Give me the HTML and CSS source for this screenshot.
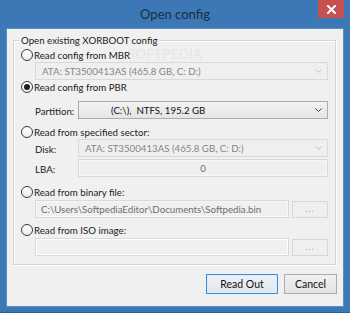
FILE: index.html
```html
<!DOCTYPE html>
<html>
<head>
<meta charset="utf-8">
<link rel="stylesheet" href="styles.css">
</head>
<body>
<div class="window">
  <div class="titlebar">
    <span class="title">Open config</span>
    <div class="close"><svg width="9" height="9" viewBox="0 0 9 9"><path d="M1 1 L8 8 M8 1 L1 8" stroke="#fff" stroke-width="2" stroke-linecap="square"/></svg></div>
  </div>
  <div class="client">
    <div class="group">
      <span class="group-title">Open existing XORBOOT config</span>
      <span class="watermark">SOFTPEDIA</span>

      <div class="radio-row"><span class="radio"></span><span class="rl">Read config from MBR</span></div>
      <div class="indent">
        <div class="combo disabled"><span class="val">ATA: ST3500413AS (465.8 GB, C: D:)</span><svg class="chev" width="7" height="4" viewBox="0 0 7 4"><path d="M0.5 0.5 L3.5 3.5 L6.5 0.5" fill="none" stroke="currentColor"/></svg></div>
      </div>

      <div class="radio-row"><span class="radio checked"></span><span class="rl">Read config from PBR</span></div>
      <div class="indent field-row gap7">
        <span class="lbl">Partition:</span>
        <div class="combo enabled"><span class="val part">(C:\),&nbsp; NTFS, 195.2 GB</span><svg class="chev" width="7" height="4" viewBox="0 0 7 4"><path d="M0.5 0.5 L3.5 3.5 L6.5 0.5" fill="none" stroke="currentColor"/></svg></div>
      </div>

      <div class="radio-row gap6"><span class="radio"></span><span class="rl">Read from specified sector:</span></div>
      <div class="indent field-row">
        <span class="lbl">Disk:</span>
        <div class="combo disabled"><span class="val">ATA: ST3500413AS (465.8 GB, C: D:)</span><svg class="chev" width="7" height="4" viewBox="0 0 7 4"><path d="M0.5 0.5 L3.5 3.5 L6.5 0.5" fill="none" stroke="currentColor"/></svg></div>
      </div>
      <div class="indent field-row gap2">
        <span class="lbl">LBA:</span>
        <div class="edit disabled center">0</div>
      </div>

      <div class="radio-row gap8"><span class="radio"></span><span class="rl">Read from binary file:</span></div>
      <div class="indent field-row gap1 browse-row">
        <div class="edit disabled">C:\Users\SoftpediaEditor\Documents\Softpedia.bin</div>
        <div class="dots">...</div>
      </div>

      <div class="radio-row gap5"><span class="radio"></span><span class="rl">Read from ISO image:</span></div>
      <div class="indent field-row gap1 browse-row">
        <div class="edit iso"></div>
        <div class="dots">...</div>
      </div>
    </div>

    <div class="buttons">
      <div class="btn default">Read Out</div>
      <div class="btn cancel">Cancel</div>
    </div>
  </div>
</div>
</body>
</html>
```

FILE: styles.css
```css
html, body {
  margin: 0;
  padding: 0;
}
body {
  font-family: Lato, "Liberation Sans", sans-serif;
  font-size: 9.7px;
  color: #1a1a1a;
}
.window {
  width: 350px;
  height: 313px;
  background: #3b78b5;
  display: flex;
  flex-direction: column;
  position: relative;
  box-sizing: border-box;
  border-bottom: 1px solid #2c5f92;
}
.titlebar {
  height: 29px;
  display: flex;
  align-items: center;
  justify-content: center;
  position: relative;
  flex: none;
}
.title {
  font-size: 13px;
  color: #1c2d40;
  margin-top: -1px;
}
.close {
  position: absolute;
  right: 6px;
  top: 0;
  width: 26px;
  height: 18px;
  background: #c75050;
  display: flex;
  align-items: center;
  justify-content: center;
}
.client {
  margin: 0 7px;
  height: 277px;
  background: #f0f0f0;
  display: flex;
  flex-direction: column;
  box-sizing: border-box;
  padding-top: 11px;
  flex: none;
  box-shadow: 0 0 0 1px #5a8fc4;
}
.group {
  margin: 0 7px 0 6px;
  height: 225px;
  box-sizing: border-box;
  border: 1px solid #d5d5d5;
  box-shadow: inset 1px 1px 0 #fff, 1px 1px 0 #fff;
  padding: 7px 7px 0;
  position: relative;
  display: flex;
  flex-direction: column;
}
.group-title {
  position: absolute;
  left: 5px;
  top: -8px;
  padding: 0 2px;
  background: #f0f0f0;
  line-height: 14px;
  z-index: 1;
}
.watermark {
  position: absolute;
  left: 114px;
  top: 7px;
  font-size: 13px;
  letter-spacing: 0.5px;
  color: rgba(200, 200, 200, 0.3);
  line-height: 13px;
  pointer-events: none;
}
.radio-row {
  height: 14px;
  display: flex;
  align-items: center;
  flex: none;
  position: relative;
}
.rl {
  position: relative;
}
.radio {
  width: 12px;
  height: 12px;
  box-sizing: border-box;
  border-radius: 50%;
  border: 1px solid #3a3a3a;
  background: linear-gradient(#ffffff, #ececec);
  margin-right: 1px;
  position: relative;
  flex: none;
}
.radio.checked::after {
  content: "";
  position: absolute;
  left: 2px;
  top: 2px;
  width: 6px;
  height: 6px;
  border-radius: 50%;
  background: #1e1e1e;
}
.indent {
  margin-left: 14px;
  flex: none;
}
.field-row {
  display: flex;
  align-items: center;
}
.gap1 { margin-top: 1px; }
.gap2 { margin-top: 2px; }
.gap5 { margin-top: 5px; }
.gap6 { margin-top: 6px; }
.gap7 { margin-top: 7px; }
.gap8 { margin-top: 8px; }
.lbl {
  width: 43px;
  flex: none;
  padding-top: 2px;
}
.combo {
  flex: 1;
  height: 18px;
  box-sizing: border-box;
  display: flex;
  align-items: center;
  padding: 0 5px 0 6px;
}
.combo .val {
  flex: 1;
  white-space: nowrap;
}
.combo.disabled {
  border: 1px solid #d9d9d9;
  background: #efefef;
  color: #858585;
}
.combo.disabled .chev {
  color: #c2c2c2;
}
.combo.enabled {
  border: 1px solid #acacac;
  background: linear-gradient(#f2f2f2, #e5e5e5);
  color: #111;
}
.combo.enabled .chev {
  color: #404040;
}
.combo .val.part {
  padding-left: 26px;
}
.edit {
  flex: 1;
  height: 18px;
  box-sizing: border-box;
  display: flex;
  align-items: center;
  padding: 0 5px;
  white-space: nowrap;
  overflow: hidden;
}
.edit.disabled {
  border: 1px solid #d9d9d9;
  background: #f0f0f0;
  box-shadow: inset 0 0 0 1px #f7f7f7;
  color: #6d6d6d;
}
.edit.center {
  justify-content: center;
}
.edit.iso {
  border: 1px solid #dadada;
  background: #f0f0f0;
  box-shadow: inset 0 0 0 1px #ffffff;
}
.browse-row {
  gap: 3px;
}
.dots {
  width: 36px;
  height: 17px;
  box-sizing: border-box;
  flex: none;
  border: 1px solid #d6d6d6;
  background: #efefef;
  color: #a8a8a8;
  display: flex;
  align-items: center;
  justify-content: center;
  font-size: 9px;
  letter-spacing: 1px;
  padding-bottom: 2px;
}
.buttons {
  margin-top: 9px;
  display: flex;
  justify-content: flex-end;
  gap: 6px;
  padding-right: 6px;
}
.btn {
  height: 20px;
  box-sizing: border-box;
  display: flex;
  align-items: center;
  justify-content: center;
  font-size: 10.5px;
  color: #111;
}
.btn.default {
  width: 72px;
  border: 1px solid #3c8ce0;
  background: linear-gradient(#eef1f5, #e3e6ea);
  box-shadow: inset 0 0 0 1px #d9ecfb;
}
.btn.cancel {
  width: 53px;
  border: 1px solid #adadad;
  background: linear-gradient(#f0f0f0, #e3e3e3);
}
```
